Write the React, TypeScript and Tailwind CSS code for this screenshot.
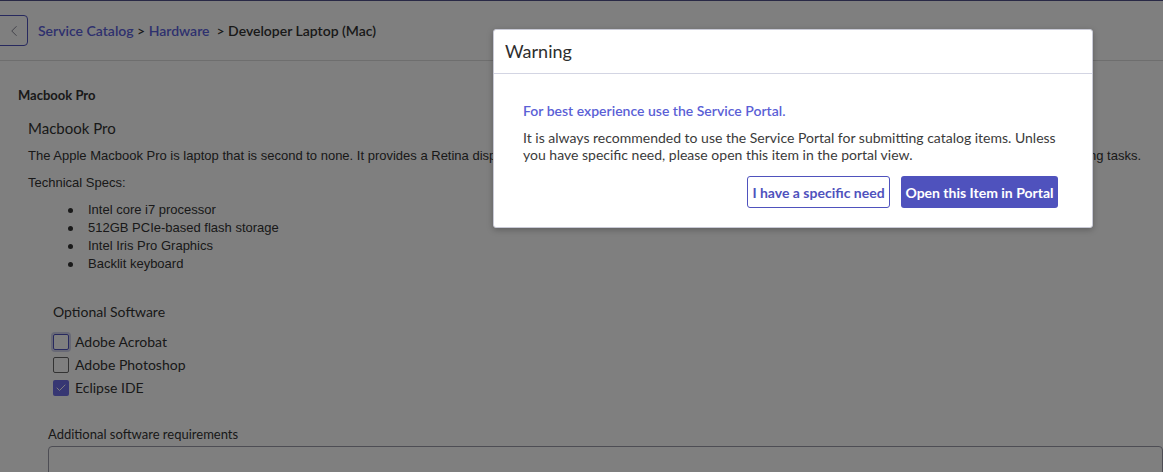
import { ChevronLeft, Check } from 'lucide-react';

const specs = ['Intel core i7 processor', '512GB PCIe-based flash storage', 'Intel Iris Pro Graphics', 'Backlit keyboard'];
const software = [
  { name: 'Adobe Acrobat', checked: false, focused: true },
  { name: 'Adobe Photoshop', checked: false, focused: false },
  { name: 'Eclipse IDE', checked: true, focused: false },
];

export default function App() {
  return (
    <div className="relative h-[472px] w-[1163px] overflow-hidden bg-white text-[#333]" style={{ fontFamily: 'Lato, "Liberation Sans", sans-serif' }}>
      {/* Page */}
      <div className="border-t border-[#52528c]">
        <header className="flex h-[60px] items-center gap-[10px] border-b border-[#dcdcdc]">
          <button className="-ml-[4px] flex h-[31px] w-[32px] items-center justify-center rounded-[4px] border border-[#4f52bd] text-[#6c6c80]">
            <ChevronLeft className="ml-[4px] h-[18px] w-[18px]" strokeWidth={1.1} />
          </button>
          <nav className="text-[14px] font-semibold">
            <span className="text-[#5d62dc]">Service Catalog</span>
            <span className="text-[#333]"> &gt; </span>
            <span className="text-[#5d62dc]">Hardware</span>
            <span className="text-[#333]">&nbsp; &gt; Developer Laptop (Mac)</span>
          </nav>
        </header>

        <main className="pt-[25px]">
          <h2 className="pl-[18px] text-[13px] font-bold leading-[18px]">Macbook Pro</h2>
          <div className="pl-[28px] pt-[14px]">
            <h3 className="text-[15px] leading-[20px]">Macbook Pro</h3>
            <div className="text-[13px] leading-[17px]" style={{ fontFamily: '"Liberation Sans", Arial, sans-serif' }}>
              <p className="mt-[9px] whitespace-nowrap">
                The Apple Macbook Pro is laptop that is second to none. It provides a Retina display, fast processors and long lasting battery, ideal for developers performing resource intensive computing tasks.
              </p>
              <p className="mt-[10px]">Technical Specs:</p>
              <ul className="mt-[10px] leading-[18px]">
                {specs.map((s) => (
                  <li key={s} className="flex items-center">
                    <span className="ml-[40px] mr-[15px] h-[5px] w-[5px] rounded-full bg-[#333]" />
                    {s}
                  </li>
                ))}
              </ul>
            </div>
          </div>

          <section className="pl-[53px] pt-[30px]">
            <p className="text-[14px] leading-[18px]">Optional Software</p>
            <div className="mt-[13px] flex flex-col gap-[7px]">
              {software.map((s) => (
                <label key={s.name} className="flex items-center gap-[6px] text-[14px] leading-[16px]">
                  <span
                    className={
                      s.checked
                        ? 'flex h-[16px] w-[16px] items-center justify-center rounded-[2px] bg-[#6e6ee6] text-white'
                        : s.focused
                          ? 'h-[16px] w-[16px] rounded-[2px] border border-[#4f52bd] shadow-[0_0_0_2px_rgba(120,130,200,0.35)]'
                          : 'h-[16px] w-[16px] rounded-[2px] border border-[#666]'
                    }
                  >
                    {s.checked && <Check className="h-[12px] w-[12px]" strokeWidth={2} />}
                  </span>
                  {s.name}
                </label>
              ))}
            </div>
          </section>

          <section className="pl-[48px] pt-[29px]">
            <p className="text-[13px] leading-[18px]">Additional software requirements</p>
            <div className="mt-[3px] h-[40px] rounded-[4px] border border-[#9a9aa8]" />
          </section>
        </main>
      </div>

      {/* Overlay */}
      <div className="absolute inset-0 bg-black/50" />

      {/* Modal */}
      <div className="absolute left-[493px] top-[29px] w-[600px] rounded-[3px] border border-[#c9cad6] bg-white shadow-[0_2px_6px_rgba(0,0,0,0.25)]">
        <div className="flex h-[44px] items-center border-b border-[#d3d5e3] px-[11px]">
          <h1 className="text-[18px] font-normal text-[#2e2e2e]">Warning</h1>
        </div>
        <div className="px-[29px] pb-[19px] pt-[28px]">
          <p className="text-[14px] font-semibold leading-[18px] text-[#5b5fd6]">For best experience use the Service Portal.</p>
          <p className="mt-[9px] text-[14px] leading-[17px] text-[#3b3b3b]">
            It is always recommended to use the Service Portal for submitting catalog items. Unless you have specific need, please open this item in the portal view.
          </p>
          <div className="mt-[13px] flex justify-end gap-[11px] pr-[5px]">
            <button className="h-[32px] w-[143px] rounded-[3px] border border-[#4f52bd] bg-white text-[14px] font-bold text-[#4f52bd]">
              I have a specific need
            </button>
            <button className="h-[32px] w-[157px] rounded-[3px] bg-[#4f52bd] text-[14px] font-bold text-white">
              Open this Item in Portal
            </button>
          </div>
        </div>
      </div>
    </div>
  );
}
